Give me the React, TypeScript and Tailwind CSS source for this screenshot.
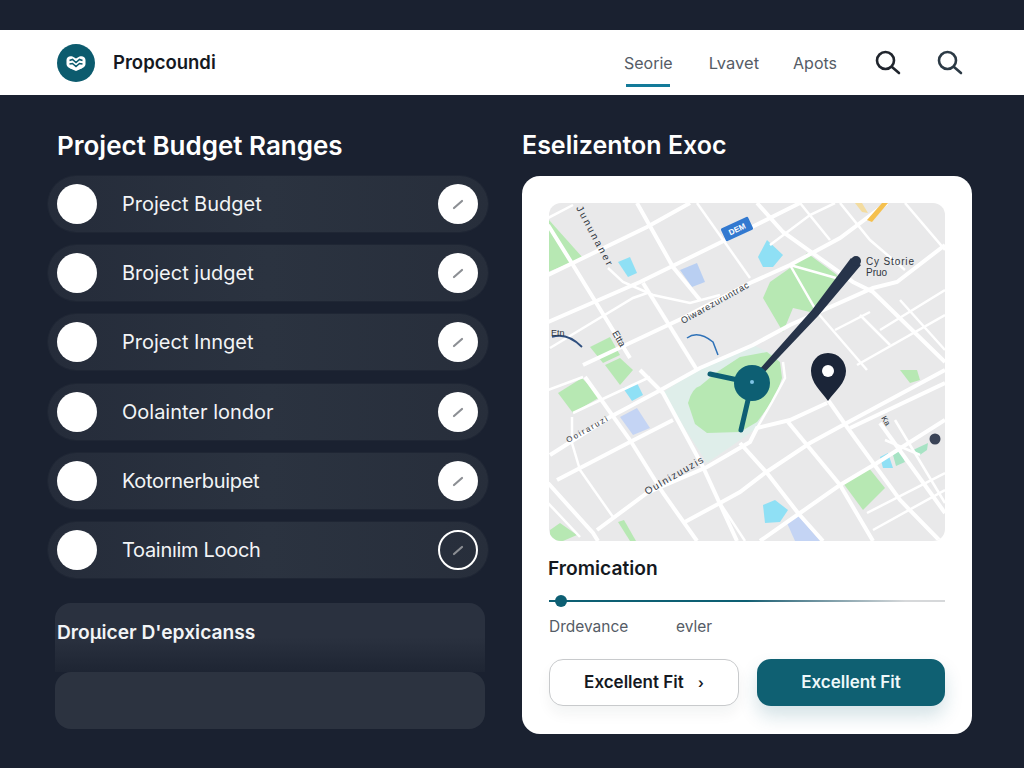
const rows = [
  { label: 'Project Budget', active: false, tight: false },
  { label: 'Broject judget', active: false, tight: false },
  { label: 'Project Innget', active: false, tight: false },
  { label: 'Oolainter londor', active: false, tight: false },
  { label: 'Kotornerbuipet', active: false, tight: true },
  { label: 'Toainıim Looch', active: true, tight: true },
];

const majorRoads = [
  '548,275 647,227 690,203',
  '548,322 640,282 750,228 800,203',
  '583,365 683,318 750,283 790,265 840,238 887,203',
  '550,455 610,417 657,392 700,368 753,345 790,325 873,288 897,282 945,245',
  '557,480 630,442 673,420',
  '597,530 647,493 707,467 750,442 757,428 790,420 827,403',
  '683,523 720,503 740,492 765,473 810,443 843,425 945,370',
  '850,428 945,383',
  '760,541 800,513 840,485 877,463 945,420',
  '548,225 573,265 630,358',
  '585,377 630,440 663,493 697,541',
  '640,370 663,393 703,467 737,541',
  '637,203 673,267 700,300',
  '643,283 697,370',
  '757,203 783,232 853,282 873,292 945,362',
  '828,400 847,427 900,500 940,541',
  '880,423 945,513',
  '740,443 767,473 798,513 823,541',
  '788,422 840,485 873,541',
  '548,483 593,533 598,541',
];

const minorRoads = [
  '548,218 573,205',
  '550,348 633,298 650,292',
  '608,268 623,282 653,295 690,303 720,295',
  '697,203 750,278',
  '548,390 583,377',
  '573,413 607,397 650,377',
  '572,417 572,443 580,470 613,517',
  '548,503 580,537',
  '783,362 785,378 772,402 757,428',
  '790,265 815,272 836,278',
  '790,265 817,312 867,370',
  '857,365 945,315',
  '835,330 870,312',
  '800,203 830,240',
  '840,203 870,240 905,270',
  '770,245 810,215 835,203',
  '905,203 945,250',
  '895,420 945,503',
  '867,513 945,473',
  '885,440 920,455',
  '873,530 945,490',
  '720,503 745,541',
  '860,315 890,345',
  '900,300 945,350',
  '880,330 945,290',
];

function MapPanel() {
  return (
    <svg viewBox="549 203 396 338" className="block w-[396px] h-[338px] rounded-xl bg-[#e9e9ea]">
      {/* pale park ground */}
      <polygon points="662,393 700,368 753,345 780,358 757,428 733,445 707,463" fill="#dfeeea" />
      {/* greens */}
      <path d="M688 403 Q692 388 700 386 L717 372 L740 357 L767 352 L780 362 L782 378 L775 398 L757 422 L740 432 L707 433 L695 424 Z" fill="#b7e8b3" />
      <polygon points="763,298 770,282 790,268 807,253 837,275 836,285 810,312 793,308 783,332" fill="#b7e8b3" />
      <polygon points="548,219 583,258 548,272" fill="#b7e8b3" />
      <polygon points="558,393 582,378 600,397 573,413" fill="#b7e8b3" />
      <polygon points="590,347 610,337 620,355 603,363" fill="#b7e8b3" />
      <polygon points="605,365 620,358 633,370 620,385" fill="#b7e8b3" />
      <polygon points="843,483 868,467 885,488 863,510" fill="#b7e8b3" />
      <polygon points="900,370 917,370 920,380 910,383" fill="#b7e8b3" />
      <polygon points="550,530 560,523 577,535 563,541 550,541" fill="#b7e8b3" />
      <polygon points="618,522 624,520 636,541 630,541" fill="#b7e8b3" />
      <polygon points="893,455 900,450 905,462 896,466" fill="#a7e3c4" />
      <polygon points="913,450 928,443 927,450 917,457" fill="#a7e3c4" />
      {/* water */}
      <polygon points="618,262 630,257 637,273 628,277" fill="#8fe0f5" />
      <polygon points="623,388 637,383 643,395 632,401" fill="#8fe0f5" />
      <polygon points="758,257 767,240 783,255 773,267 763,267" fill="#8fe0f5" />
      <polygon points="763,505 775,500 788,510 780,522 765,523" fill="#8fe0f5" />
      <polygon points="880,457 888,453 893,468 883,468" fill="#8fe0f5" />
      {/* blue blocks */}
      <polygon points="680,270 697,263 705,282 692,287" fill="#b9cff2" />
      <polygon points="620,417 637,408 650,428 633,435" fill="#c4d4f4" />
      <polygon points="787,523 798,515 820,541 795,541" fill="#c4d4f4" />
      {/* roads */}
      {minorRoads.map((points) => (
        <polyline key={points} points={points} fill="none" stroke="#ffffff" strokeWidth="2.5" />
      ))}
      {majorRoads.map((points) => (
        <polyline key={points} points={points} fill="none" stroke="#ffffff" strokeWidth="4" />
      ))}
      {/* amber road */}
      <polygon points="855,203 862,203 868,213 862,212" fill="#f3dca0" />
      <polygon points="867,220 882,203 888,203 872,222" fill="#f5c04e" />
      {/* small arcs */}
      <path d="M552 337 Q567 332 582 347" fill="none" stroke="#2f4f7e" strokeWidth="1.8" />
      <path d="M687 338 Q698 330 713 342 L718 355" fill="none" stroke="#2f72b8" strokeWidth="1.5" />
      {/* blue badge */}
      <g transform="rotate(-25 737 229)">
        <rect x="722" y="222" width="30" height="14" rx="1.5" fill="#3279d0" />
        <text x="737" y="232" textAnchor="middle" fontSize="8" fontWeight="700" fill="#ffffff" fontFamily="Liberation Sans, sans-serif">DEM</text>
      </g>
      {/* labels */}
      <g fontFamily="Liberation Sans, sans-serif" fill="#2f3640">
        <text transform="translate(576 208) rotate(62)" fontSize="10" textLength="66">Jununaner</text>
        <text transform="translate(612 333) rotate(60)" fontSize="9.5">Etta</text>
        <text transform="translate(683 324) rotate(-29)" fontSize="9" textLength="76">Oiwarezuruntrac</text>
        <text transform="translate(568 443) rotate(-29)" fontSize="8" textLength="46">Ooiraruzi</text>
        <text transform="translate(647 495) rotate(-30)" fontSize="10" textLength="66">Oulnizuuzis</text>
        <text x="551" y="336" fontSize="9">Etn</text>
        <text x="866" y="265" fontSize="10" textLength="48">Cy Storie</text>
        <text x="866" y="276" fontSize="10">Pruo</text>
        <text transform="translate(881 418) rotate(60)" fontSize="8">Ka</text>
      </g>
      {/* route */}
      <path d="M758 371 L812 310 L851 258 L861 265 L818 316 L762 375 Z" fill="#27344a" strokeLinejoin="round" />
      <circle cx="856" cy="261" r="5" fill="#27344a" />
      {/* hub */}
      <g stroke="#0d5f73" strokeWidth="5" strokeLinecap="round">
        <line x1="752" y1="383" x2="710" y2="374" />
        <line x1="752" y1="383" x2="741" y2="430" />
      </g>
      <circle cx="752" cy="383" r="18" fill="#0d5f73" />
      <circle cx="752" cy="382" r="2" fill="#7fc4e6" />
      {/* pin */}
      <path d="M828 353 C817 353 811 362 811 371 C811 383 821 391 828 401 C835 391 846 383 846 371 C846 362 839 353 828 353 Z" fill="#1b2538" />
      <circle cx="828" cy="371" r="6" fill="#ffffff" />
      <circle cx="935" cy="439" r="5.5" fill="#3a4356" />
    </svg>
  );
}

export default function App() {
  return (
    <div className="h-[768px] overflow-hidden bg-[#1a2130] font-['Inter',sans-serif] pt-[30px]">
      <header className="h-[65px] bg-white flex items-center pl-[57px] pr-[61px]">
        <svg viewBox="0 0 38 38" className="w-[38px] h-[38px] shrink-0">
          <circle cx="19" cy="19" r="19" fill="#0c5b6e" />
          <path d="M9.5 16 C9.5 12.5 13 11.5 15.5 12.5 L19 14.5 L22.5 12.5 C25 11.5 28.5 12.5 28.5 16 L28.5 20 C28.5 23 25 24.5 22.5 25.5 L19 27 L15.5 25.5 C13 24.5 9.5 23 9.5 20 Z" fill="#ffffff" />
          <path d="M12.5 16.5 L15.5 15.5 L19 18.5 L22.5 15.5 L25.5 16.5" fill="none" stroke="#0c5b6e" strokeWidth="1.6" />
          <path d="M12.5 20 L15.5 19.5 L19 22.5 L22.5 19.5 L25.5 20" fill="none" stroke="#0c5b6e" strokeWidth="1.6" />
        </svg>
        <span className="ml-[18px] text-[18.5px] font-semibold text-[#15191f]">Propcoundi</span>
        <nav className="ml-auto flex items-center leading-6 text-[#555c66]">
          <a className="relative text-[16px]">
            Seorie
            <span className="absolute left-[2px] right-[3px] top-[33px] h-[3px] bg-[#137a99]" />
          </a>
          <a className="ml-[36px] text-[16.5px] leading-6">Lvavet</a>
          <a className="ml-[34px] text-[16px] leading-6">Apots</a>
        </nav>
        <svg viewBox="0 0 26 26" className="ml-[38px] w-[26px] h-[26px]" fill="none" stroke="#20252d" strokeWidth="2.6" strokeLinecap="round">
          <circle cx="10.5" cy="10.5" r="8.5" />
          <line x1="17" y1="17" x2="24" y2="23" />
        </svg>
        <svg viewBox="0 0 26 26" className="ml-[36px] w-[26px] h-[26px]" fill="none" stroke="#2c3a45" strokeWidth="2.6" strokeLinecap="round">
          <circle cx="10.5" cy="10.5" r="8.5" />
          <line x1="17" y1="17" x2="24" y2="23" />
        </svg>
      </header>

      <main className="flex items-start pl-[48px] pt-[32px]">
        <section className="w-[440px]">
          <h2 className="pl-[9px] pt-[1px] text-[26px] leading-[35px] font-semibold text-white">Project Budget Ranges</h2>
          <div className="mt-[13px] flex flex-col gap-[13.2px]">
            {rows.map((row) => (
              <div key={row.label} className="h-[56px] rounded-full bg-gradient-to-r from-[#252c3a] via-[#2b3340] to-[#272e3b] ring-1 ring-[#1f2634] flex items-center pl-[9px] pr-[10px]">
                <span className="w-[40px] h-[40px] rounded-full bg-white shrink-0" />
                <span className={`ml-[25px] text-[20px] text-[#f2f4f6] ${row.tight ? 'tracking-[-0.3px]' : ''}`}>{row.label}</span>
                <span className={`ml-auto w-[40px] h-[40px] rounded-full flex items-center justify-center ${row.active ? 'border-2 border-white' : 'bg-white'}`}>
                  <svg viewBox="0 0 14 14" className="w-[14px] h-[14px]">
                    <line x1="3" y1="11" x2="11" y2="4" stroke="#8c8f94" strokeWidth="2.2" strokeLinecap="round" />
                  </svg>
                </span>
              </div>
            ))}
          </div>
          <div className="mt-[25px] ml-[7px] w-[430px]">
            <div className="h-[69px] rounded-t-2xl bg-gradient-to-b from-[#2a313f] via-[#2a313f] to-[#1e2533] flex items-center">
              <span className="ml-[2px] -mt-[11px] text-[19.2px] font-semibold text-[#f2f4f6]">Droµicer D'epxicanss</span>
            </div>
            <div className="h-[57px] rounded-2xl bg-[#2c3340]" />
          </div>
        </section>

        <section className="ml-[34px] w-[450px]">
          <h2 className="text-[25px] leading-[36px] font-semibold text-white">Eselizenton Exoc</h2>
          <div className="mt-[13px] h-[558px] rounded-[18px] bg-white p-[27px]">
            <MapPanel />
            <h3 className="mt-[14px] -ml-[1px] text-[19.2px] leading-[26px] font-semibold text-[#15191f]">Fromication</h3>
            <div className="relative mt-[19px] h-[2px] bg-gradient-to-r from-[#0d5f73] via-[#0d5f73] via-50% to-[#d6d8da] to-90%">
              <span className="absolute left-[6px] -top-[5px] w-[12px] h-[12px] rounded-full bg-[#0d5f73]" />
            </div>
            <div className="mt-[15px] flex text-[15.5px] leading-[20px] text-[#555c66]">
              <span className="w-[127px]">Drdevance</span>
              <span>evler</span>
            </div>
            <div className="mt-[22px] flex gap-[18px]">
              <button className="w-[190px] h-[47px] rounded-[14px] border-[1.5px] border-[#c8cacc] bg-white text-[17px] font-semibold text-[#15191f] shadow-[0_8px_14px_rgba(20,30,40,0.05)]">
                Excellent Fit <span className="ml-[10px] text-[14px]">›</span>
              </button>
              <button className="w-[188px] h-[47px] rounded-[14px] bg-[#0f6072] text-[17px] font-semibold text-[#eef8fa] shadow-[0_10px_18px_rgba(15,96,114,0.18)]">
                Excellent Fit
              </button>
            </div>
          </div>
        </section>
      </main>
    </div>
  );
}
